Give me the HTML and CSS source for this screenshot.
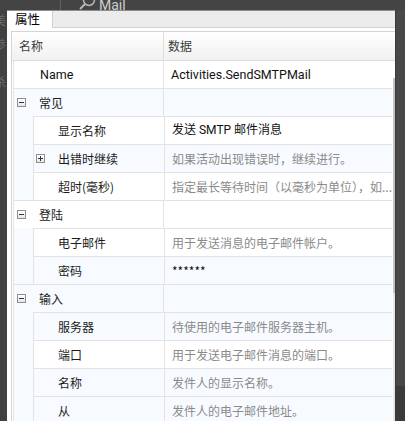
FILE: index.html
```html
<!DOCTYPE html>
<html lang="zh">
<head>
<meta charset="utf-8">
<title>属性</title>
<link rel="stylesheet" href="styles.css">
</head>
<body>
<div class="top">
  <div class="top-sep"></div>
  <svg class="top-search" width="18" height="10" viewBox="0 0 18 10"><circle cx="11" cy="0" r="5.5" fill="none" stroke="#b8b8b8" stroke-width="1.5"/><line x1="7" y1="4" x2="2" y2="9" stroke="#b8b8b8" stroke-width="2"/></svg>
  <div class="top-mail">Mail</div>
</div>
<div class="main">
  <div class="left-bg">
    <div class="ghost g1">美</div>
    <div class="ghost g2">参</div>
    <div class="ghost g3">杀</div>
  </div>
  <div class="panel">
    <div class="tabs">
      <div class="tab">属性</div>
      <div class="tab-rest"></div>
    </div>
    <div class="content">
      <div class="grid">
        <div class="header">
          <div class="hcell hname">名称</div>
          <div class="hcell hval">数据</div>
        </div>
        <div class="body">
          <div class="rows-col">
            <div class="rows">
              <div class="row top-row white">
                <div class="ncell top-name">Name</div>
                <div class="vcell val latin">Activities.SendSMTPMail</div>
              </div>

              <div class="group">
                <div class="row cat blue">
                  <div class="ncell cat-name"><span class="box minus"></span><span>常见</span></div>
                  <div class="vcell"></div>
                </div>
                <div class="group-body">
                  <div class="gutter"></div>
                  <div class="children">
                    <div class="row child white">
                      <div class="ncell child-name">显示名称</div>
                      <div class="vcell val mixed">发送 SMTP 邮件消息</div>
                    </div>
                    <div class="row child blue">
                      <div class="ncell child-name with-box"><span class="box plus"></span><span>出错时继续</span></div>
                      <div class="vcell desc">如果活动出现错误时，继续进行。</div>
                    </div>
                    <div class="row child white">
                      <div class="ncell child-name">超时(毫秒)</div>
                      <div class="vcell desc">指定最长等待时间（以毫秒为单位），如...</div>
                    </div>
                  </div>
                </div>
              </div>

              <div class="group">
                <div class="row cat white">
                  <div class="ncell cat-name"><span class="box minus"></span><span>登陆</span></div>
                  <div class="vcell"></div>
                </div>
                <div class="group-body">
                  <div class="gutter"></div>
                  <div class="children">
                    <div class="row child white">
                      <div class="ncell child-name">电子邮件</div>
                      <div class="vcell desc">用于发送消息的电子邮件帐户。</div>
                    </div>
                    <div class="row child blue">
                      <div class="ncell child-name">密码</div>
                      <div class="vcell val">******</div>
                    </div>
                  </div>
                </div>
              </div>

              <div class="group">
                <div class="row cat blue">
                  <div class="ncell cat-name"><span class="box minus"></span><span>输入</span></div>
                  <div class="vcell"></div>
                </div>
                <div class="group-body">
                  <div class="gutter"></div>
                  <div class="children">
                    <div class="row child blue">
                      <div class="ncell child-name">服务器</div>
                      <div class="vcell desc">待使用的电子邮件服务器主机。</div>
                    </div>
                    <div class="row child white">
                      <div class="ncell child-name">端口</div>
                      <div class="vcell desc">用于发送电子邮件消息的端口。</div>
                    </div>
                    <div class="row child blue">
                      <div class="ncell child-name">名称</div>
                      <div class="vcell desc">发件人的显示名称。</div>
                    </div>
                    <div class="row child blue">
                      <div class="ncell child-name">从</div>
                      <div class="vcell desc">发件人的电子邮件地址。</div>
                    </div>
                  </div>
                </div>
              </div>
            </div>
          </div>
          <div class="scroll">
            <div class="thumb"></div>
          </div>
        </div>
      </div>
    </div>
  </div>
  <div class="right-bg">
    <div class="right-top"></div>
    <div class="right-bottom"></div>
  </div>
</div>
</body>
</html>
```

FILE: styles.css
```css
html, body {
  margin: 0;
  padding: 0;
}
body {
  width: 405px;
  height: 421px;
  overflow: hidden;
  background: #414141;
  font-family: "Noto Sans CJK SC", "Noto Sans", sans-serif;
  font-size: 12px;
  color: #1b1b1b;
}

/* background window strip on top */
.top {
  height: 10px;
  display: flex;
  align-items: flex-end;
  overflow: hidden;
  background: #444444;
}
.top-sep {
  width: 1px;
  height: 10px;
  background: #626262;
  margin-left: 60px;
  align-self: stretch;
}
.top-search {
  margin-left: 17px;
  display: block;
  align-self: flex-start;
}
.top-mail {
  margin-left: 3px;
  color: #cfcfcf;
  font-size: 14px;
  line-height: 14px;
  margin-bottom: -2px;
  font-family: Roboto, sans-serif;
}

.main {
  display: flex;
  height: 411px;
}

.left-bg {
  width: 7px;
  overflow: hidden;
  display: flex;
  flex-direction: column;
}
.ghost {
  color: #6c6c6c;
  font-size: 12px;
  line-height: 12px;
  margin-left: -6px;
}
.g1 { margin-top: 4px; }
.g2 { margin-top: 12px; }
.g3 { margin-top: 26px; }

.panel {
  width: 388px;
  background: #ffffff;
  border-top: 1px solid #8e8e8e;
  display: flex;
  flex-direction: column;
}

.tabs {
  display: flex;
  height: 17px;
}
.tab {
  width: 46px;
  background: #ffffff;
  border-right: 1px solid #d2d2d2;
  color: #000;
  font-size: 12.5px;
  line-height: 16px;
  padding-left: 8px;
  box-sizing: border-box;
}
.tab-rest {
  flex: 1;
  background: #ececec;
  border-bottom: 1px solid #d2d2d2;
}

.content {
  flex: 1;
  padding: 3px 0 0 4px;
  display: flex;
  flex-direction: column;
  overflow: hidden;
}

.grid {
  width: 384px;
  border-top: 1px solid #d4d4d4;
  border-left: 1px solid #d4d4d4;
  box-sizing: border-box;
  flex: 1;
  display: flex;
  flex-direction: column;
}

.header {
  display: flex;
  height: 29px;
  border-bottom: 1px solid #dcdcdc;
  background: linear-gradient(#ffffff, #f1f1f1);
  box-sizing: border-box;
  color: #3c3c3c;
}
.hcell {
  line-height: 28px;
}
.hname {
  width: 152px;
  border-right: 1px solid #dedede;
  padding-left: 7px;
  box-sizing: border-box;
}
.hval {
  padding-left: 4px;
}

.body {
  flex: 1;
  display: flex;
}
.rows-col {
  width: 380px;
  padding-left: 1px;
  box-sizing: border-box;
}
.rows {
  border-left: 1px solid #e4e4e4;
}

.row {
  display: flex;
  height: 28px;
  box-sizing: border-box;
  line-height: 27px;
  white-space: nowrap;
}
.white { background: #ffffff; }
.blue { background: #f7fbff; }

.top-row {
  border-bottom: 1px solid #e3e3e3;
}
.ncell {
  border-right: 1px solid #e3e3e3;
  box-sizing: border-box;
  display: flex;
  align-items: center;
}
.top-name {
  width: 150px;
  padding-left: 26px;
  font-family: Roboto, sans-serif;
  font-size: 12.5px;
  color: #111111;
}
.cat {
  height: 27px;
}
.cat-name {
  width: 150px;
  padding-left: 3px;
}
.cat-name .box {
  margin-right: 13px;
}
.vcell {
  flex: 1;
  padding-left: 7px;
  overflow: hidden;
}
.val {
  color: #111111;
}
.latin {
  font-family: Roboto, sans-serif;
  font-size: 12.5px;
}
.mixed {
  font-family: Roboto, "Noto Sans CJK SC", sans-serif;
}
.desc {
  color: #8a8a8a;
}

.group {
  border-bottom: 1px solid #e3e3e3;
}
.group-body {
  display: flex;
}
.gutter {
  width: 19px;
  border-right: 1px solid #e3e3e3;
  background: #f7fbff;
}
.children {
  flex: 1;
}
.child {
  border-top: 1px solid #e3e3e3;
}
.child-name {
  width: 131px;
  padding-left: 24px;
}
.child-name.with-box {
  padding-left: 2px;
}
.with-box .box {
  margin-right: 13px;
}

.box {
  width: 9px;
  height: 9px;
  border: 1px solid #8f8f8f;
  box-sizing: border-box;
  background: linear-gradient(#ffffff, #e6e6e6);
  display: inline-flex;
  align-items: center;
  justify-content: center;
  flex: none;
}
.box::before {
  content: "";
  width: 5px;
  height: 1px;
  background: #333333;
}
.plus {
  position: relative;
}
.plus::after {
  content: "";
  position: absolute;
  width: 1px;
  height: 5px;
  background: #333333;
  left: 3px;
  top: 1px;
}

.scroll {
  width: 2px;
  margin-left: 1px;
  background: #e6e6e6;
  padding-top: 17px;
  background-clip: content-box;
  box-sizing: border-box;
}
.thumb {
  height: 215px;
  background: #c4c4c4;
}

.right-bg {
  width: 10px;
  display: flex;
  flex-direction: column;
  border-left: 1px solid #3a3a3a;
  box-sizing: border-box;
}
.right-top {
  height: 376px;
  background: #484848;
}
.right-bottom {
  flex: 1;
  background: #3b3b3b;
}
```
